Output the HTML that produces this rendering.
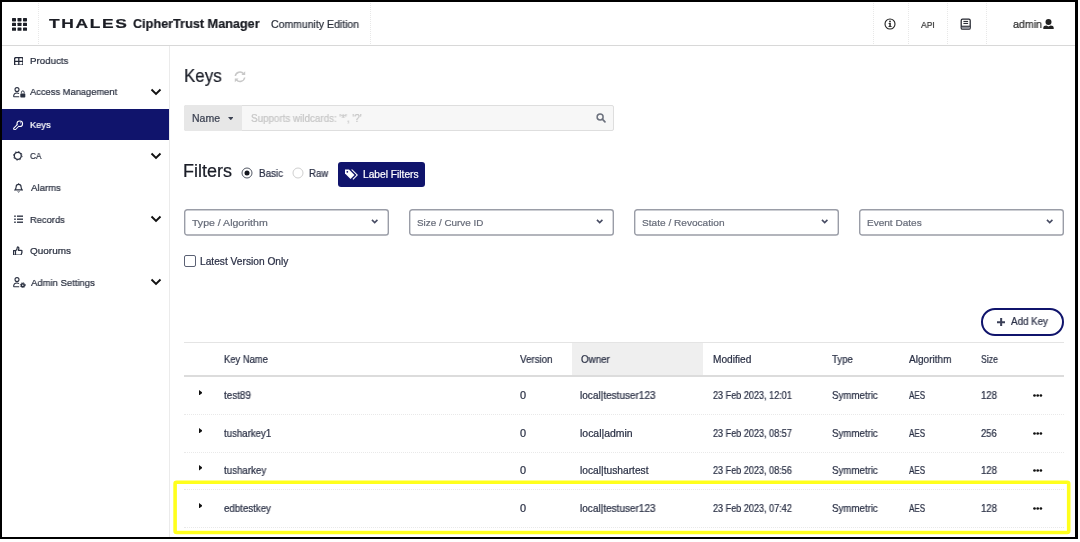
<!DOCTYPE html>
<html><head><meta charset="utf-8">
<style>
*{box-sizing:border-box;margin:0;padding:0}
html,body{width:1080px;height:542px;overflow:hidden;background:#fff}
body{position:relative;font-family:"Liberation Sans",sans-serif;color:#242b3a;font-size:11px}
.abs{position:absolute}
.t{position:absolute;white-space:nowrap;line-height:1.15;transform-origin:0 50%;will-change:transform;-webkit-text-stroke:0.22px currentColor}
/* frame */
#ft{left:0;top:0;width:1078px;height:2px;background:#000}
#fl{left:0;top:0;width:2px;height:539px;background:#000}
#fr{left:1075px;top:0;width:3px;height:539px;background:#000}
#fb{left:0;top:537px;width:1078px;height:2px;background:#000}
/* header */
#hdr{left:2px;top:44.600px;width:1073px;height:1.200px;background:#d8d8d8}
.vsep{position:absolute;top:3px;height:41px;width:0;border-left:1px dotted #e8e8e8}
/* sidebar */
#side{left:2px;top:46px;width:168px;height:491px;border-right:1px solid #ebebeb;background:#fff}
#active{left:2px;top:109px;width:167px;height:31px;background:#10146c}
.nav{font-size:11px;color:#2a3040;left:30px}
.chev{position:absolute;left:150.400px;width:12px;height:8px}
/* inputs */
.dd{position:absolute;top:209px;width:205px;height:27px}
.dd span{position:absolute;left:8px;top:7px;font-size:11px;color:#5b6170;line-height:1;white-space:nowrap}
.dd svg.cv{position:absolute;right:10.300px;top:9.800px}.dd svg.bx{position:absolute;left:0;top:0}
.hl{position:absolute;left:184px;width:880px;height:0;border-top:1px dotted #e9e9e9}
.c{font-size:10.5px;color:#262c3b}
</style></head><body>
<!-- header -->
<div id="hdr" class="abs"></div>
<div class="vsep" style="left:37.500px"></div>
<div class="vsep" style="left:370px"></div>
<div class="vsep" style="left:873px"></div>
<div class="vsep" style="left:908px"></div>
<div class="vsep" style="left:947px"></div>
<div class="vsep" style="left:986px"></div>
<svg class="abs" style="left:12px;top:18px" width="15" height="13" viewBox="0 0 15 13"><g fill="#1d1f27"><rect x="0" y="0" width="4" height="3.4" rx=".6"/><rect x="5.5" y="0" width="4" height="3.4" rx=".6"/><rect x="11" y="0" width="4" height="3.4" rx=".6"/><rect x="0" y="4.7" width="4" height="3.4" rx=".6"/><rect x="5.5" y="4.7" width="4" height="3.4" rx=".6"/><rect x="11" y="4.7" width="4" height="3.4" rx=".6"/><rect x="0" y="9.4" width="4" height="3.4" rx=".6"/><rect x="5.5" y="9.4" width="4" height="3.4" rx=".6"/><rect x="11" y="9.4" width="4" height="3.4" rx=".6"/></g></svg>
<svg class="abs" style="left:884.400px;top:18.400px" width="12" height="12" viewBox="0 0 12 12"><circle cx="6" cy="6" r="5" fill="none" stroke="#222" stroke-width="1.1"/><rect x="5.3" y="5" width="1.5" height="3.6" fill="#222"/><rect x="4.6" y="5" width="1.6" height=".9" fill="#222"/><rect x="4.5" y="8" width="3.1" height=".9" fill="#222"/><circle cx="6" cy="3.5" r=".9" fill="#222"/></svg>
<svg class="abs" style="left:960px;top:18px" width="12" height="13" viewBox="0 0 12 13"><rect x="1.200" y="1.200" width="9" height="10" rx="1.300" fill="#fff" stroke="#23252e" stroke-width="1.250"/><rect x="1.800" y="8.300" width="7.800" height="2.300" fill="#8b8e98"/><rect x="1.200" y="7.700" width="9" height="1" fill="#23252e"/><rect x="3.400" y="2.900" width="4.700" height="1.050" fill="#23252e"/><rect x="3.400" y="4.900" width="4.700" height="1.050" fill="#23252e"/></svg>
<svg class="abs" style="left:1043px;top:19px" width="11" height="10" viewBox="0 0 11 10"><circle cx="5.5" cy="3" r="3" fill="#222"/><path d="M0.3 10v-1.2c0-1.6 1.4-2.4 3-2.4l2.2 1 2.2-1c1.6 0 3 .8 3 2.4V10z" fill="#222"/></svg>

<!-- sidebar -->
<div id="side" class="abs"></div>
<div id="active" class="abs"></div>
<svg class="chev" style="top:88px" viewBox="0 0 12 8"><path d="M1.5 1.5L6 6l4.5-4.5" fill="none" stroke="#111" stroke-width="1.9"/></svg>
<svg class="chev" style="top:152px" viewBox="0 0 12 8"><path d="M1.5 1.5L6 6l4.5-4.5" fill="none" stroke="#111" stroke-width="1.9"/></svg>
<svg class="chev" style="top:215px" viewBox="0 0 12 8"><path d="M1.5 1.5L6 6l4.5-4.5" fill="none" stroke="#111" stroke-width="1.9"/></svg>
<svg class="chev" style="top:278px" viewBox="0 0 12 8"><path d="M1.5 1.5L6 6l4.5-4.5" fill="none" stroke="#111" stroke-width="1.9"/></svg>
<!-- sidebar icons -->
<svg class="abs" style="left:13.800px;top:56.600px" width="9.600" height="8.800" viewBox="0 0 11 10"><rect x=".65" y=".65" width="9.700" height="8.700" rx="1.700" fill="none" stroke="#232838" stroke-width="1.600"/><path d="M5.500.6v8.800M.6 5h9.800" stroke="#232838" stroke-width="1.450"/></svg>
<svg class="abs" style="left:13px;top:87px" width="13" height="11" viewBox="0 0 13 11"><circle cx="4" cy="2.6" r="2" fill="none" stroke="#2a3040" stroke-width="1.1"/><path d="M.6 9.8c0-2.6 1.4-3.8 3.4-3.8 1 0 1.6.3 2 .6M.6 9.8h5.6" fill="none" stroke="#2a3040" stroke-width="1.1"/><rect x="7.3" y="6.4" width="5" height="4" rx=".7" fill="#2a3040"/><path d="M8.4 6.4V5.3a1.4 1.4 0 0 1 2.8 0v1.1" fill="none" stroke="#2a3040" stroke-width="1"/></svg>
<svg class="abs" style="left:13px;top:119.500px" width="10.500" height="10.500" viewBox="0 0 11 11"><g stroke-linecap="round" stroke-linejoin="round"><path d="M5.300 5.700L1.900 9.100" stroke="#fff" stroke-width="3.400" fill="none"/><circle cx="7.100" cy="3.900" r="3.500" fill="#fff"/><path d="M5.300 5.700L1.900 9.100" stroke="#10146c" stroke-width="1.300" fill="none"/><circle cx="7.100" cy="3.900" r="2.350" fill="#10146c"/><circle cx="8" cy="3" r=".55" fill="#fff"/></g></svg>
<svg class="abs" style="left:13.300px;top:151px" width="9.600" height="9.600" viewBox="0 0 11 11"><circle cx="5.5" cy="5.5" r="4" fill="none" stroke="#2a3040" stroke-width="1.5"/><circle cx="5.5" cy="5.5" r="5" fill="none" stroke="#2a3040" stroke-width="1" stroke-dasharray="1.6 2.3"/></svg>
<svg class="abs" style="left:13.900px;top:182.500px" width="9.200" height="10" viewBox="0 0 11 12"><path d="M5.5 1.6c-2 0-3 1.4-3 3.2 0 2-.6 2.7-1.3 3.5h8.6c-.7-.8-1.3-1.500-1.300-3.500 0-1.800-1-3.200-3-3.200z" fill="none" stroke="#2a3040" stroke-width="1.350"/><path d="M4.400 10.200a1.200 1.200 0 0 0 2.200 0M5.500.4v1.200" stroke="#2a3040" stroke-width="1.100" fill="none"/></svg>
<svg class="abs" style="left:13.800px;top:215px" width="9.500" height="8.400" viewBox="0 0 11 10"><g fill="#2a3040"><rect x="0" y=".6" width="2" height="1.600"/><rect x="3.400" y=".6" width="7.600" height="1.600"/><rect x="0" y="4.200" width="2" height="1.600"/><rect x="3.400" y="4.200" width="7.600" height="1.600"/><rect x="0" y="7.800" width="2" height="1.600"/><rect x="3.400" y="7.800" width="7.600" height="1.600"/></g></svg>
<svg class="abs" style="left:13.400px;top:245.600px" width="9.800" height="9.800" viewBox="0 0 11 11"><path d="M.6 5.200h2.200v5H.6zM2.800 5.400c1.400-1 2-2.400 2-3.800 0-.8 1.800-.8 1.800.8 0 1-.3 1.700-.6 2.400h3.200c1 0 1.200 1 .6 1.500.5.500.4 1.200-.2 1.500.3.500.2 1.100-.4 1.400.2.600-.2 1-.9 1H5c-.8 0-1.400-.300-2.200-.600" fill="none" stroke="#2a3040" stroke-width="1.350" stroke-linejoin="round"/></svg>
<svg class="abs" style="left:13px;top:277px" width="13" height="11" viewBox="0 0 13 11"><circle cx="4" cy="2.600" r="2" fill="none" stroke="#2a3040" stroke-width="1.100"/><path d="M.6 9.800c0-2.600 1.400-3.800 3.400-3.800 1 0 1.600.300 2 .6M.6 9.800h5.600" fill="none" stroke="#2a3040" stroke-width="1.100"/><circle cx="9.800" cy="8.200" r="1.500" fill="none" stroke="#2a3040" stroke-width="1.500"/><circle cx="9.800" cy="8.200" r="2.500" fill="none" stroke="#2a3040" stroke-width="1" stroke-dasharray="1 1"/></svg>

<!-- title -->
<svg class="abs" style="left:234.400px;top:71px" width="12" height="11.500" viewBox="0 0 12 11.500"><path d="M1.300 5a4.700 4.700 0 0 1 8.300-2.200M10.700 6.500a4.700 4.700 0 0 1-8.300 2.200" fill="none" stroke="#c8c8c8" stroke-width="1.500"/><path d="M11.200 .3v3.800H7.400zM.8 11.200V7.400h3.800z" fill="#c8c8c8"/></svg>
<!-- search -->
<div class="abs" style="left:184px;top:105.400px;width:430px;height:25.500px;background:#f7f7f7;border:1px solid #dedede;border-radius:2px"></div>
<div class="abs" style="left:184px;top:105.400px;width:57.500px;height:25.500px;background:#e7e7e7;border-radius:2px 0 0 2px"></div>
<svg class="abs" style="left:227.800px;top:117px" width="5.600" height="3.300" viewBox="0 0 7 4"><path d="M0 0h7L3.500 4z" fill="#3c4252"/></svg>
<svg class="abs" style="left:596px;top:113px" width="10" height="9.700" viewBox="0 0 11 11"><circle cx="4.500" cy="4.500" r="3.400" fill="none" stroke="#6c717d" stroke-width="1.700"/><path d="M7 7L10 10" stroke="#6c717d" stroke-width="1.900" stroke-linecap="round"/></svg>

<!-- filters -->
<svg class="abs" style="left:241px;top:167px" width="12" height="12" viewBox="0 0 12 12"><circle cx="6" cy="6" r="5" fill="#fff" stroke="#4a4f5c" stroke-width=".95"/><circle cx="6" cy="6" r="2.500" fill="#14161d"/></svg>
<svg class="abs" style="left:292px;top:167px" width="12" height="12" viewBox="0 0 12 12"><circle cx="6" cy="6" r="5" fill="#fff" stroke="#cfcfcf" stroke-width="1"/></svg>
<div class="abs" style="left:338px;top:162px;width:87.400px;height:25px;background:#10146c;border-radius:3px"></div>
<svg class="abs" style="left:345px;top:169px" width="13" height="11" viewBox="0 0 13 11"><path d="M0 .5v4l5.500 5.500 4-4L4 .5z" fill="#fff"/><path d="M6 .5l5.500 5.500-4 4 .8.800L13 6 7.500.5z" fill="#fff"/><circle cx="2.300" cy="2.800" r=".9" fill="#10146c"/></svg>

<div class="dd" style="left:184px"><svg class="bx" width="205" height="27" viewBox="0 0 205 27"><rect x=".7" y=".7" width="203.600" height="25.300" rx="2.600" fill="#fff" stroke="#9a9da7" stroke-width="1.400"/></svg><svg class="cv" width="7.400" height="5.500" viewBox="0 0 8 6"><path d="M1 1l3 3 3-3" fill="none" stroke="#474c63" stroke-width="1.700"/></svg></div>
<div class="dd" style="left:409px"><svg class="bx" width="205" height="27" viewBox="0 0 205 27"><rect x=".7" y=".7" width="203.600" height="25.300" rx="2.600" fill="#fff" stroke="#9a9da7" stroke-width="1.400"/></svg><svg class="cv" width="7.400" height="5.500" viewBox="0 0 8 6"><path d="M1 1l3 3 3-3" fill="none" stroke="#474c63" stroke-width="1.700"/></svg></div>
<div class="dd" style="left:634px"><svg class="bx" width="205" height="27" viewBox="0 0 205 27"><rect x=".7" y=".7" width="203.600" height="25.300" rx="2.600" fill="#fff" stroke="#9a9da7" stroke-width="1.400"/></svg><svg class="cv" width="7.400" height="5.500" viewBox="0 0 8 6"><path d="M1 1l3 3 3-3" fill="none" stroke="#474c63" stroke-width="1.700"/></svg></div>
<div class="dd" style="left:859px"><svg class="bx" width="205" height="27" viewBox="0 0 205 27"><rect x=".7" y=".7" width="203.600" height="25.300" rx="2.600" fill="#fff" stroke="#9a9da7" stroke-width="1.400"/></svg><svg class="cv" width="7.400" height="5.500" viewBox="0 0 8 6"><path d="M1 1l3 3 3-3" fill="none" stroke="#474c63" stroke-width="1.700"/></svg></div>

<div class="abs" style="left:184px;top:255px;width:12px;height:12px;border:1px solid #5b6174;border-radius:2px;background:#fff"></div>

<!-- add key -->
<div class="abs" style="left:981px;top:308px;width:83px;height:28px;border:2px solid #10146c;border-radius:14px;background:#fff"></div>
<svg class="abs" style="left:996.800px;top:318px" width="8.300" height="8.300" viewBox="0 0 9 9"><path d="M4.500 0v9M0 4.500h9" stroke="#3b4058" stroke-width="2.200"/></svg>

<!-- table -->
<div class="abs" style="left:184px;top:342px;width:880px;height:1px;background:#e4e4e4"></div>
<div class="abs" style="left:572px;top:343px;width:131px;height:32px;background:#efefef"></div>
<div class="abs" style="left:184px;top:375px;width:880px;height:1.800px;background:#dcdcdc"></div>
<div class="hl" style="top:414px"></div>
<div class="hl" style="top:452px"></div>
<div class="hl" style="top:489px"></div>
<div class="hl" style="top:527px"></div>
<div class="t" id="thales" style="left:49.46px;top:16.9px;font-size:12.7px;color:#1b1d24;font-weight:bold;letter-spacing:1.2px;transform:scaleX(1.3712);">THALES</div>
<div class="t" id="ctm" style="left:133.10px;top:16.2px;font-size:13.6px;color:#1b1d24;font-weight:bold;transform:scaleX(0.9313);">CipherTrust Manager</div>
<div class="t" id="ce" style="left:271.41px;top:18.2px;font-size:10.7px;color:#2a2f3a;transform:scaleX(0.9814);">Community Edition</div>
<div class="t" id="api" style="left:921.00px;top:19.6px;font-size:9.2px;color:#333;transform:scaleX(0.9271);">API</div>
<div class="t" id="admin" style="left:1013.06px;top:18.2px;font-size:11px;color:#2c2c2c;transform:scaleX(0.9708);">admin</div>
<div class="t" id="n1" style="left:30.01px;top:54.9px;font-size:9.8px;color:#2a3040;transform:scaleX(0.9914);">Products</div>
<div class="t" id="n2" style="left:30.20px;top:86.4px;font-size:9.8px;color:#2a3040;transform:scaleX(0.9531);">Access Management</div>
<div class="t" id="n3" style="left:29.74px;top:119.3px;font-size:9.8px;color:#fff;transform:scaleX(0.9449);">Keys</div>
<div class="t" id="n4" style="left:30.12px;top:150.3px;font-size:9.8px;color:#2a3040;transform:scaleX(0.8499);">CA</div>
<div class="t" id="n5" style="left:30.50px;top:182.0px;font-size:9.8px;color:#2a3040;transform:scaleX(0.9787);">Alarms</div>
<div class="t" id="n6" style="left:29.74px;top:213.6px;font-size:9.8px;color:#2a3040;transform:scaleX(0.9536);">Records</div>
<div class="t" id="n7" style="left:30.04px;top:245.1px;font-size:9.8px;color:#2a3040;transform:scaleX(1.0177);">Quorums</div>
<div class="t" id="n8" style="left:30.50px;top:276.5px;font-size:9.8px;color:#2a3040;transform:scaleX(0.9686);">Admin Settings</div>
<div class="t" id="keys" style="left:183.68px;top:65.4px;font-size:18.5px;color:#1a1d27;transform:scaleX(0.9142);">Keys</div>
<div class="t" id="name" style="left:191.66px;top:113.0px;font-size:10px;color:#3c4252;transform:scaleX(1.0505);">Name</div>
<div class="t" id="ph" style="left:251.06px;top:113.0px;font-size:10px;color:#c6c6c6;transform:scaleX(0.9819);">Supports wildcards: '*', '?'</div>
<div class="t" id="filters" style="left:183.39px;top:161.4px;font-size:17.5px;color:#1a1d27;transform:scaleX(1.0279);">Filters</div>
<div class="t" id="basic" style="left:258.62px;top:167.9px;font-size:10px;color:#2b3046;transform:scaleX(0.9785);">Basic</div>
<div class="t" id="raw" style="left:308.73px;top:167.9px;font-size:10px;color:#2b3046;transform:scaleX(0.9619);">Raw</div>
<div class="t" id="lf" style="left:362.58px;top:169.1px;font-size:10px;color:#fff;transform:scaleX(1.0203);">Label Filters</div>
<div class="t" id="d1" style="left:192.28px;top:216.5px;font-size:9.8px;color:#676c79;transform:scaleX(1.0773);">Type / Algorithm</div>
<div class="t" id="d2" style="left:417.10px;top:216.5px;font-size:9.8px;color:#676c79;transform:scaleX(1.0066);">Size / Curve ID</div>
<div class="t" id="d3" style="left:642.09px;top:216.5px;font-size:9.8px;color:#676c79;transform:scaleX(1.0306);">State / Revocation</div>
<div class="t" id="d4" style="left:866.68px;top:216.5px;font-size:9.8px;color:#676c79;transform:scaleX(1.0243);">Event Dates</div>
<div class="t" id="lvo" style="left:200.39px;top:255.9px;font-size:10.1px;color:#2b3046;transform:scaleX(1.0094);">Latest Version Only</div>
<div class="t" id="addkey" style="left:1011.00px;top:316.4px;font-size:10px;color:#2d3248;transform:scaleX(0.9788);">Add Key</div>
<div class="t" id="h0" style="left:223.65px;top:353.7px;font-size:10.1px;color:#2a3045;transform:scaleX(0.9318);">Key Name</div>
<div class="t" id="h1" style="left:520.30px;top:353.7px;font-size:10.1px;color:#2a3045;transform:scaleX(0.9646);">Version</div>
<div class="t" id="h2" style="left:580.66px;top:353.7px;font-size:10.1px;color:#2a3045;transform:scaleX(0.9714);">Owner</div>
<div class="t" id="h3" style="left:712.50px;top:353.7px;font-size:10.1px;color:#2a3045;transform:scaleX(1.0038);">Modified</div>
<div class="t" id="h4" style="left:831.91px;top:353.7px;font-size:10.1px;color:#2a3045;transform:scaleX(0.9540);">Type</div>
<div class="t" id="h5" style="left:908.60px;top:353.7px;font-size:10.1px;color:#2a3045;transform:scaleX(0.9953);">Algorithm</div>
<div class="t" id="h6" style="left:981.41px;top:353.7px;font-size:10.1px;color:#2a3045;transform:scaleX(0.8626);">Size</div>
<div class="t" id="r0k" style="left:224.25px;top:389.7px;font-size:10.1px;color:#2a3045;transform:scaleX(0.9741);">test89</div>
<div class="t" id="r0v" style="left:519.92px;top:389.7px;font-size:10.1px;color:#2a3045;transform:scaleX(1.0816);">0</div>
<div class="t" id="r0o" style="left:580.46px;top:389.7px;font-size:10.1px;color:#2a3045;transform:scaleX(0.9919);">local|testuser123</div>
<div class="t" id="r0d" style="left:712.85px;top:389.7px;font-size:10.1px;color:#2a3045;transform:scaleX(0.9003);">23 Feb 2023, 12:01</div>
<div class="t" id="r0t" style="left:831.67px;top:389.7px;font-size:10.1px;color:#2a3045;transform:scaleX(0.9618);">Symmetric</div>
<div class="t" id="r0a" style="left:908.60px;top:389.7px;font-size:10.1px;color:#2a3045;transform:scaleX(0.7991);">AES</div>
<div class="t" id="r0s" style="left:981.19px;top:389.7px;font-size:10.1px;color:#2a3045;transform:scaleX(0.9500);">128</div>
<div class="t" id="r1k" style="left:224.26px;top:427.7px;font-size:10.1px;color:#2a3045;transform:scaleX(0.9552);">tusharkey1</div>
<div class="t" id="r1v" style="left:519.92px;top:427.7px;font-size:10.1px;color:#2a3045;transform:scaleX(1.0816);">0</div>
<div class="t" id="r1o" style="left:580.43px;top:427.7px;font-size:10.1px;color:#2a3045;transform:scaleX(1.0355);">local|admin</div>
<div class="t" id="r1d" style="left:712.85px;top:427.7px;font-size:10.1px;color:#2a3045;transform:scaleX(0.9003);">23 Feb 2023, 08:57</div>
<div class="t" id="r1t" style="left:831.67px;top:427.7px;font-size:10.1px;color:#2a3045;transform:scaleX(0.9618);">Symmetric</div>
<div class="t" id="r1a" style="left:908.60px;top:427.7px;font-size:10.1px;color:#2a3045;transform:scaleX(0.7991);">AES</div>
<div class="t" id="r1s" style="left:981.43px;top:427.7px;font-size:10.1px;color:#2a3045;transform:scaleX(0.9351);">256</div>
<div class="t" id="r2k" style="left:224.26px;top:465.2px;font-size:10.1px;color:#2a3045;transform:scaleX(0.9648);">tusharkey</div>
<div class="t" id="r2v" style="left:519.92px;top:465.2px;font-size:10.1px;color:#2a3045;transform:scaleX(1.0816);">0</div>
<div class="t" id="r2o" style="left:580.44px;top:465.2px;font-size:10.1px;color:#2a3045;transform:scaleX(1.0128);">local|tushartest</div>
<div class="t" id="r2d" style="left:712.85px;top:465.2px;font-size:10.1px;color:#2a3045;transform:scaleX(0.8998);">23 Feb 2023, 08:56</div>
<div class="t" id="r2t" style="left:831.67px;top:465.2px;font-size:10.1px;color:#2a3045;transform:scaleX(0.9618);">Symmetric</div>
<div class="t" id="r2a" style="left:908.60px;top:465.2px;font-size:10.1px;color:#2a3045;transform:scaleX(0.7991);">AES</div>
<div class="t" id="r2s" style="left:981.19px;top:465.2px;font-size:10.1px;color:#2a3045;transform:scaleX(0.9500);">128</div>
<div class="t" id="r3k" style="left:224.02px;top:503.0px;font-size:10.1px;color:#2a3045;transform:scaleX(0.9619);">edbtestkey</div>
<div class="t" id="r3v" style="left:519.92px;top:503.0px;font-size:10.1px;color:#2a3045;transform:scaleX(1.0816);">0</div>
<div class="t" id="r3o" style="left:580.46px;top:503.0px;font-size:10.1px;color:#2a3045;transform:scaleX(0.9919);">local|testuser123</div>
<div class="t" id="r3d" style="left:712.85px;top:503.0px;font-size:10.1px;color:#2a3045;transform:scaleX(0.9003);">23 Feb 2023, 07:42</div>
<div class="t" id="r3t" style="left:831.67px;top:503.0px;font-size:10.1px;color:#2a3045;transform:scaleX(0.9618);">Symmetric</div>
<div class="t" id="r3a" style="left:908.60px;top:503.0px;font-size:10.1px;color:#2a3045;transform:scaleX(0.7991);">AES</div>
<div class="t" id="r3s" style="left:981.19px;top:503.0px;font-size:10.1px;color:#2a3045;transform:scaleX(0.9500);">128</div>
<svg class="abs" style="left:198.8px;top:389.5px" width="3.6" height="5.6" viewBox="0 0 4 6"><path d="M0 0l4 3-4 3z" fill="#111"/></svg>
<svg class="abs" style="left:1032.8px;top:393.6px" width="9.800" height="3" viewBox="0 0 9.800 3"><circle cx="1.5" cy="1.5" r="1.35" fill="#111"/><circle cx="4.7" cy="1.5" r="1.35" fill="#111"/><circle cx="7.9" cy="1.5" r="1.35" fill="#111"/></svg>
<svg class="abs" style="left:198.8px;top:427.5px" width="3.6" height="5.6" viewBox="0 0 4 6"><path d="M0 0l4 3-4 3z" fill="#111"/></svg>
<svg class="abs" style="left:1032.8px;top:431.6px" width="9.800" height="3" viewBox="0 0 9.800 3"><circle cx="1.5" cy="1.5" r="1.35" fill="#111"/><circle cx="4.7" cy="1.5" r="1.35" fill="#111"/><circle cx="7.9" cy="1.5" r="1.35" fill="#111"/></svg>
<svg class="abs" style="left:198.8px;top:465.0px" width="3.6" height="5.6" viewBox="0 0 4 6"><path d="M0 0l4 3-4 3z" fill="#111"/></svg>
<svg class="abs" style="left:1032.8px;top:469.1px" width="9.800" height="3" viewBox="0 0 9.800 3"><circle cx="1.5" cy="1.5" r="1.35" fill="#111"/><circle cx="4.7" cy="1.5" r="1.35" fill="#111"/><circle cx="7.9" cy="1.5" r="1.35" fill="#111"/></svg>
<svg class="abs" style="left:198.8px;top:502.8px" width="3.6" height="5.6" viewBox="0 0 4 6"><path d="M0 0l4 3-4 3z" fill="#111"/></svg>
<svg class="abs" style="left:1032.8px;top:506.9px" width="9.800" height="3" viewBox="0 0 9.800 3"><circle cx="1.5" cy="1.5" r="1.35" fill="#111"/><circle cx="4.7" cy="1.5" r="1.35" fill="#111"/><circle cx="7.9" cy="1.5" r="1.35" fill="#111"/></svg>
<!-- yellow -->
<svg class="abs" style="left:170px;top:476px" width="905" height="62" viewBox="170 476 905 62"><rect x="175.100" y="482.300" width="893.600" height="50.200" rx="1.500" fill="none" stroke="#ffff1c" stroke-width="3.600"/></svg>
<!-- frame -->
<div id="ft" class="abs"></div><div id="fl" class="abs"></div><div id="fr" class="abs"></div><div id="fb" class="abs"></div>
</body></html>
